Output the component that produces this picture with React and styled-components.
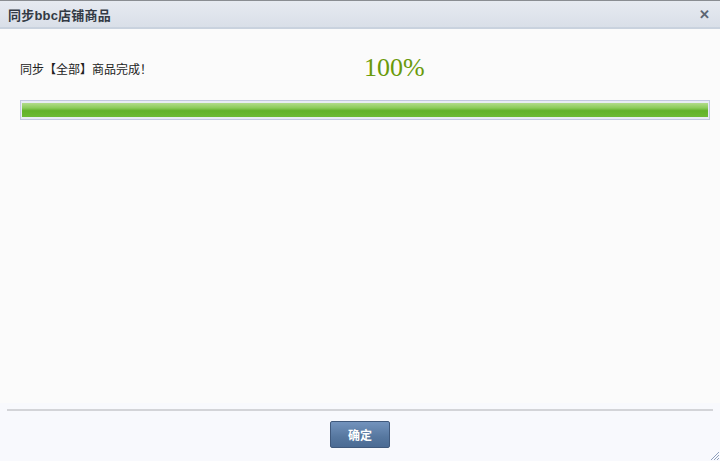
import React from 'react';
import styled, { createGlobalStyle } from 'styled-components';

const GlobalStyle = createGlobalStyle`
  html, body {
    margin: 0;
    padding: 0;
    width: 720px;
    height: 461px;
    overflow: hidden;
    font-family: "Liberation Sans", "Noto Sans CJK SC", sans-serif;
  }
`;

const Dialog = styled.div`
  display: flex;
  flex-direction: column;
  width: 720px;
  height: 461px;
  background: #fbfbfb;
`;

const TitleBar = styled.div`
  display: flex;
  align-items: center;
  justify-content: space-between;
  height: 26px;
  padding: 0 10px 0 8px;
  border-top: 1px solid #8a8d92;
  border-bottom: 2px solid #c9d2de;
  background: linear-gradient(#e6eaf1, #d9dfe8);
`;

const Title = styled.h1`
  margin: 0;
  font-size: 13px;
  font-weight: bold;
  color: #333a44;
  letter-spacing: 0.2px;
`;

const Close = styled.span`
  font-size: 13px;
  font-weight: bold;
  color: #5c6572;
  line-height: 1;
`;

const Body = styled.main`
  flex: 1;
  display: flex;
  flex-direction: column;
  padding: 19px 10px 0 20px;
`;

const StatusRow = styled.div`
  display: flex;
  align-items: center;
  height: 40px;
`;

const StatusText = styled.p`
  margin: 0;
  width: 344px;
  font-size: 12px;
  color: #222;
`;

const Percent = styled.span`
  font-family: "Liberation Serif", serif;
  font-variant-numeric: oldstyle-nums;
  font-size: 26px;
  color: #6a9a0a;
`;

const Track = styled.div`
  margin-top: 12px;
  height: 14px;
  padding: 2px 1px;
  border: 1px solid #c3c8df;
  background: #e8ecf4;
`;

const Fill = styled.div`
  height: 100%;
  background: linear-gradient(#b2dc8a 0%, #8ccb5a 35%, #62b22a 55%, #6cba34 100%);
`;

const Footer = styled.footer`
  position: relative;
  display: flex;
  flex-direction: column;
  align-items: center;
  height: 58px;
  padding: 0 7px;
  background: #f8f9fd;
`;

const Divider = styled.hr`
  align-self: stretch;
  margin: 6px 0 0;
  border: none;
  border-top: 2px solid #d3d4d8;
`;

const Button = styled.button`
  margin-top: 10px;
  width: 60px;
  height: 27px;
  border: 1px solid #40597c;
  border-radius: 2px;
  background: linear-gradient(#7393bd, #56779f 60%, #4b6b94);
  color: #fff;
  font-family: "Liberation Sans", "Noto Sans CJK SC", sans-serif;
  font-size: 12px;
  font-weight: bold;
  cursor: pointer;
`;

const Grip = styled.svg`
  position: absolute;
  right: 1px;
  bottom: 1px;
`;

function App() {
  return (
    <>
      <GlobalStyle />
      <Dialog>
        <TitleBar>
          <Title>同步bbc店铺商品</Title>
          <Close>✕</Close>
        </TitleBar>
        <Body>
          <StatusRow>
            <StatusText>同步【全部】商品完成！</StatusText>
            <Percent>100%</Percent>
          </StatusRow>
          <Track>
            <Fill style={{ width: '100%' }} />
          </Track>
        </Body>
        <Footer>
          <Divider />
          <Button>确定</Button>
          <Grip width="8" height="8" viewBox="0 0 8 8">
            <path d="M8 0 L0 8 M8 3 L3 8 M8 6 L6 8" stroke="#8fa0bd" strokeWidth="1" />
          </Grip>
        </Footer>
      </Dialog>
    </>
  );
}

export default App;
